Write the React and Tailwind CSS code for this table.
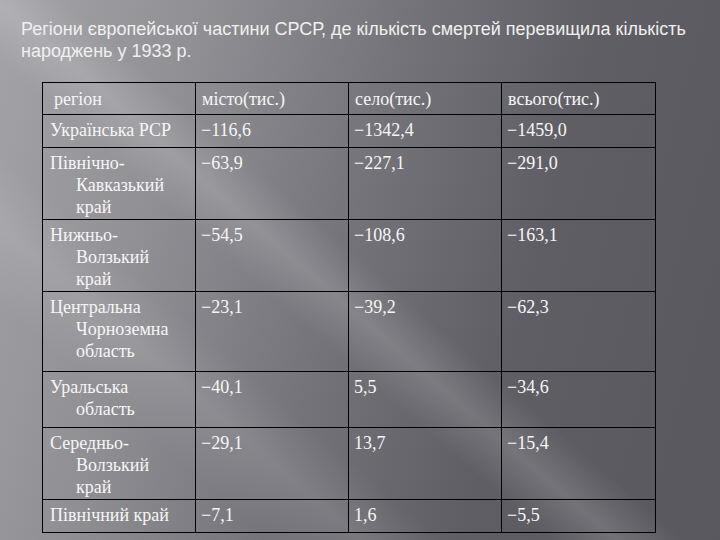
import React from "react";

const rows = [
  { h: "h-[33px]", r: ["Українська РСР"], v: ["−116,6", "−1342,4", "−1459,0"] },
  { h: "h-[72px]", r: ["Північно-", "Кавказький", "край"], v: ["−63,9", "−227,1", "−291,0"] },
  { h: "h-[72px]", r: ["Нижньо-", "Волзький", "край"], v: ["−54,5", "−108,6", "−163,1"] },
  { h: "h-[80px]", r: ["Центральна", "Чорноземна", "область"], v: ["−23,1", "−39,2", "−62,3"] },
  { h: "h-[56px]", r: ["Уральська", "область"], v: ["−40,1", "5,5", "−34,6"] },
  { h: "h-[72px]", r: ["Середньо-", "Волзький", "край"], v: ["−29,1", "13,7", "−15,4"] },
  { h: "h-[33px]", r: ["Північний край"], v: ["−7,1", "1,6", "−5,5"] },
];

export default function App() {
  return (
    <div className="w-[720px] h-[540px] overflow-hidden bg-[#5a595f] bg-[linear-gradient(41deg,rgba(255,255,255,0)_41%,rgba(255,255,255,0.14)_46%,rgba(255,255,255,0)_51%),linear-gradient(41deg,rgba(255,255,255,0)_20%,rgba(255,255,255,0.1)_27%,rgba(255,255,255,0)_33%),linear-gradient(105deg,#a4a3a8_0%,#908f94_24%,#747379_48%,#5f5e64_70%,#59585e_100%)]">
      <div className="pt-[18px] pl-[21px] pr-[10px] text-[18px] leading-[22px] text-[#f0f0f0] font-['Liberation_Sans',Arial,sans-serif]">
        Регіони європейської частини СРСР, де кількість смертей перевищила кількість народжень у 1933 р.
      </div>
      <div className="pl-[42px] pt-[20px]">
        <table className="border-collapse table-fixed w-[613px] text-[18px] leading-[22px] text-[#f6f6f6] font-['Liberation_Serif','Times_New_Roman',serif]">
          <colgroup>
            <col className="w-[153px]" />
            <col className="w-[153px]" />
            <col className="w-[153px]" />
            <col className="w-[154px]" />
          </colgroup>
          <tbody>
            <tr className="h-[32px]">
              <td className="border border-black align-top pt-[5px] pl-[11px] pr-[6px]">регіон</td>
              <td className="border border-black align-top pt-[5px] px-[6px]">місто(тис.)</td>
              <td className="border border-black align-top pt-[5px] px-[6px]">село(тис.)</td>
              <td className="border border-black align-top pt-[5px] px-[6px]">всього(тис.)</td>
            </tr>
            {rows.map((row, i) => (
              <tr key={i} className={row.h}>
                <td className="border border-black align-top pt-[4px] pl-[7px] pr-[4px]">
                  {row.r.map((line, j) => (
                    <div key={j} className={j === 0 ? "" : "pl-[26px]"}>
                      {line}
                    </div>
                  ))}
                </td>
                {row.v.map((val, j) => (
                  <td key={j} className="border border-black align-top pt-[4px] px-[5px]">
                    {val}
                  </td>
                ))}
              </tr>
            ))}
          </tbody>
        </table>
      </div>
    </div>
  );
}
